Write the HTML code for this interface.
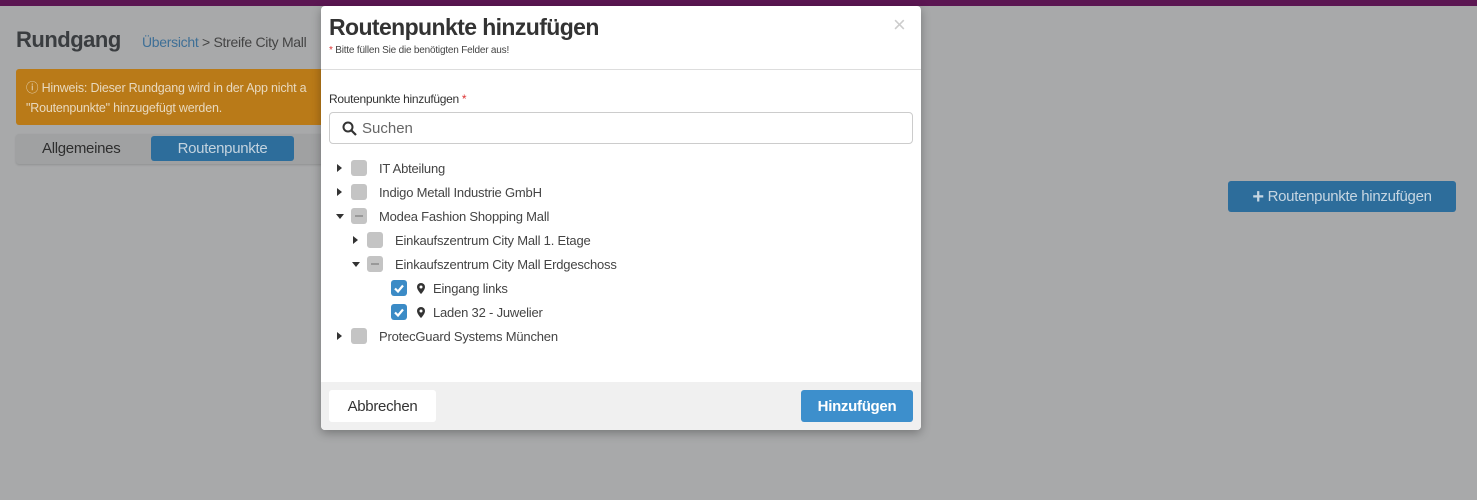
<!DOCTYPE html>
<html><head><meta charset="utf-8"><style>
*{box-sizing:border-box;margin:0;padding:0}
body{width:1477px;height:500px;overflow:hidden;background:#a8a9aa;font-family:"Liberation Sans",sans-serif;position:relative;color:#333}
.top{position:absolute;left:0;top:0;width:1477px;height:6px;background:#5b1652}
.abs{position:absolute;white-space:nowrap}
.modal{position:absolute;left:321px;top:6px;width:600px;height:424px;background:#fff;border-radius:4px;box-shadow:0 3px 10px rgba(0,0,0,.3);overflow:hidden}
.row{position:absolute;height:20px;display:flex;align-items:center;font-size:13px;color:#444;letter-spacing:-0.2px}
.cb{width:16px;height:16px;border-radius:3px;background:#c4c4c4;display:inline-block;position:relative}
.cb.ind:after{content:"";position:absolute;left:4px;top:7px;width:8px;height:2px;background:#999}
.cb.chk{background:#3b8bc6}
.tri{width:0;height:0;display:inline-block}
.tr{border-top:4px solid transparent;border-bottom:4px solid transparent;border-left:5px solid #333}
.td{border-left:4px solid transparent;border-right:4px solid transparent;border-top:5px solid #333}
</style></head><body>
<div class="top"></div>
<div class="abs" style="left:16px;top:27px;font-size:22px;font-weight:bold;color:#3a3d40;letter-spacing:-0.5px">Rundgang</div>
<div class="abs" style="left:142px;top:34px;font-size:14px;color:#3e6f96;letter-spacing:-0.3px">Übersicht <span style="color:#444">&gt; Streife City Mall</span></div>
<div class="abs" style="left:16px;top:69px;width:400px;height:56px;background:#b97a18;border-radius:3px;color:#e8d9bf;font-size:12.5px;padding:9px 10px;line-height:20px;letter-spacing:-0.2px">ⓘ Hinweis: Dieser Rundgang wird in der App nicht a<br>"Routenpunkte" hinzugefügt werden.</div>
<div class="abs" style="left:16px;top:134px;width:400px;height:30px;background:#a0a1a2;border-radius:3px;box-shadow:0 1px 2px rgba(0,0,0,.15)"></div>
<div class="abs" style="left:42px;top:140px;font-size:15px;color:#2e2e2e;letter-spacing:-0.3px">Allgemeines</div>
<div class="abs" style="left:151px;top:136px;width:143px;height:25px;background:#2d6d9b;border-radius:3px;color:#c3d3df;font-size:15px;text-align:center;line-height:25px;letter-spacing:-0.3px">Routenpunkte</div>
<div class="abs" style="left:1228px;top:181px;width:228px;height:31px;background:#2d6d9b;border-radius:3px;color:#c6d6e2;font-size:15px;text-align:center;line-height:31px;letter-spacing:-0.3px"><b style="font-size:20px;vertical-align:-2px">+</b> Routenpunkte hinzufügen</div>
<div class="modal">
 <div class="abs" style="left:8px;top:8px;font-size:23px;font-weight:bold;color:#333;letter-spacing:-0.6px">Routenpunkte hinzufügen</div>
 <div class="abs" style="left:572px;top:6px;font-size:22px;color:#ccc">×</div>
 <div class="abs" style="left:8px;top:39px;font-size:10px;color:#444;letter-spacing:-0.2px"><span style="color:#d33">*</span> Bitte füllen Sie die benötigten Felder aus!</div>
 <div class="abs" style="left:0;top:63px;width:600px;height:1px;background:#ddd"></div>
 <div class="abs" style="left:8px;top:86px;font-size:12px;color:#333;letter-spacing:-0.3px">Routenpunkte hinzufügen <span style="color:#d33">*</span></div>
 <div class="abs" style="left:8px;top:106px;width:584px;height:32px;border:1px solid #ccc;border-radius:4px;font-size:15px;color:#666;padding:7px 0 0 32px">Suchen
  <svg style="position:absolute;left:12px;top:8px" width="15" height="15" viewBox="0 0 15 15"><circle cx="6" cy="6" r="4.5" fill="none" stroke="#333" stroke-width="2"/><path d="M9.5 9.5L14 14" stroke="#333" stroke-width="2.2"/></svg></div>
 <div class="row" style="left:16px;top:152px"><span class="tri tr"></span><span class="cb" style="margin-left:9px"></span><span style="margin-left:12px">IT Abteilung</span></div>
 <div class="row" style="left:16px;top:176px"><span class="tri tr"></span><span class="cb" style="margin-left:9px"></span><span style="margin-left:12px">Indigo Metall Industrie GmbH</span></div>
 <div class="row" style="left:15px;top:200px"><span class="tri td"></span><span class="cb ind" style="margin-left:7px"></span><span style="margin-left:12px">Modea Fashion Shopping Mall</span></div>
 <div class="row" style="left:32px;top:224px"><span class="tri tr"></span><span class="cb" style="margin-left:9px"></span><span style="margin-left:12px">Einkaufszentrum City Mall 1. Etage</span></div>
 <div class="row" style="left:31px;top:248px"><span class="tri td"></span><span class="cb ind" style="margin-left:7px"></span><span style="margin-left:12px">Einkaufszentrum City Mall Erdgeschoss</span></div>
 <div class="row" style="left:70px;top:272px"><span class="cb chk"><svg width="16" height="16" viewBox="0 0 16 16"><path d="M4 8.5l3 3 5-6" fill="none" stroke="#fff" stroke-width="2.2"/></svg></span><svg style="margin-left:10px" width="8" height="11" viewBox="0 0 8 11"><path d="M4 0a4 4 0 0 0-4 4c0 3 4 7 4 7s4-4 4-7a4 4 0 0 0-4-4z" fill="#333"/><circle cx="4" cy="4" r="1.5" fill="#fff"/></svg><span style="margin-left:8px">Eingang links</span></div>
 <div class="row" style="left:70px;top:296px"><span class="cb chk"><svg width="16" height="16" viewBox="0 0 16 16"><path d="M4 8.5l3 3 5-6" fill="none" stroke="#fff" stroke-width="2.2"/></svg></span><svg style="margin-left:10px" width="8" height="11" viewBox="0 0 8 11"><path d="M4 0a4 4 0 0 0-4 4c0 3 4 7 4 7s4-4 4-7a4 4 0 0 0-4-4z" fill="#333"/><circle cx="4" cy="4" r="1.5" fill="#fff"/></svg><span style="margin-left:8px">Laden 32 - Juwelier</span></div>
 <div class="row" style="left:16px;top:320px"><span class="tri tr"></span><span class="cb" style="margin-left:9px"></span><span style="margin-left:12px">ProtecGuard Systems München</span></div>
 <div class="abs" style="left:0;top:376px;width:600px;height:48px;background:#f0f0f0"></div>
 <div class="abs" style="left:8px;top:384px;width:107px;height:32px;background:#fff;border-radius:3px;font-size:15px;color:#333;text-align:center;line-height:33px;letter-spacing:-0.3px">Abbrechen</div>
 <div class="abs" style="left:480px;top:384px;width:112px;height:32px;background:#3d8fcc;border-radius:3px;font-size:15px;color:#fff;text-align:center;line-height:33px;font-weight:bold;letter-spacing:-0.3px">Hinzufügen</div>
</div>
</body></html>
